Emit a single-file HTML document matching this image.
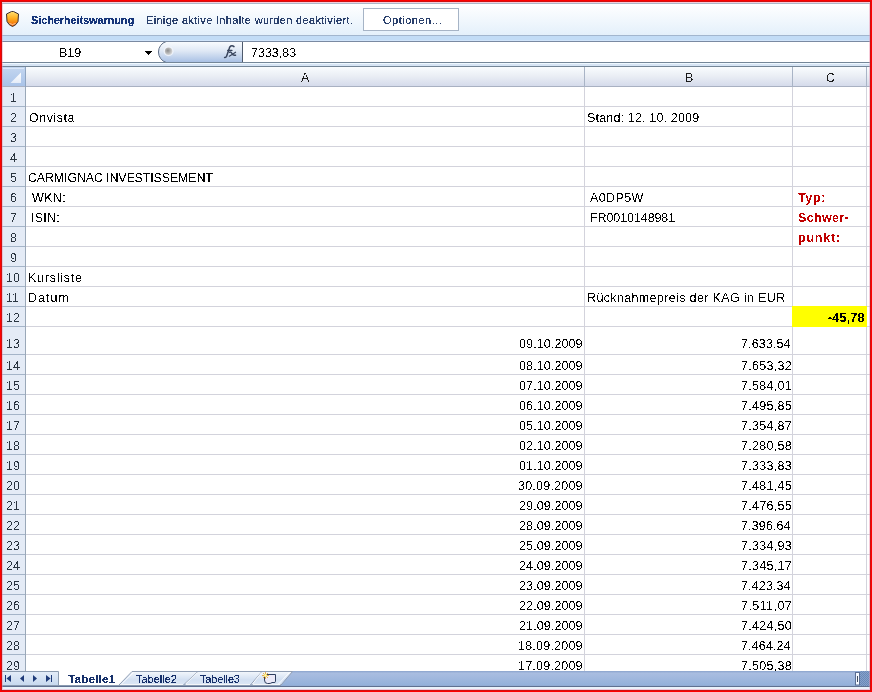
<!DOCTYPE html><html><head><meta charset="utf-8"><style>
*{margin:0;padding:0;box-sizing:border-box}
html,body{width:872px;height:692px;overflow:hidden;background:#fff;font-family:"Liberation Sans",sans-serif}
.a{position:absolute}
.t{position:absolute;white-space:pre;line-height:1;filter:url(#th)}
</style></head><body>
<svg width="1" height="1" style="position:absolute;left:0;top:0"><defs><filter id="th" filterUnits="userSpaceOnUse" x="-20" y="-20" width="600" height="60"><feComponentTransfer><feFuncA type="discrete" tableValues="0 1"/></feComponentTransfer></filter><filter id="th4" filterUnits="userSpaceOnUse" x="-20" y="-20" width="600" height="60"><feComponentTransfer><feFuncA type="discrete" tableValues="0 0 1 1 1"/></feComponentTransfer></filter></defs></svg>
<svg class="a" style="left:0;top:0" width="872" height="87" viewBox="0 0 872 87" shape-rendering="crispEdges">
<defs>
<linearGradient id="mg" x1="0" y1="0" x2="0" y2="1"><stop offset="0" stop-color="#ffffff"/><stop offset="1" stop-color="#e4f0fb"/></linearGradient>
<linearGradient id="hg" x1="0" y1="0" x2="0" y2="1"><stop offset="0" stop-color="#f9fcfe"/><stop offset="0.5" stop-color="#e9edf4"/><stop offset="1" stop-color="#d5dbeb"/></linearGradient>
<linearGradient id="cg" x1="0" y1="0" x2="0" y2="1"><stop offset="0" stop-color="#c3d6f0"/><stop offset="1" stop-color="#a9c3e8"/></linearGradient>
</defs>
<rect x="2" y="3" width="868" height="1" fill="#aab9ca"/>
<rect x="2" y="4" width="868" height="31" fill="url(#mg)"/>
<rect x="2" y="35" width="868" height="1" fill="#a2b6ce"/>
<rect x="2" y="36" width="868" height="4" fill="#c2dcf6"/>
<rect x="2" y="40" width="868" height="1" fill="#d0e4fa"/>
<rect x="2" y="41" width="868" height="1" fill="#7a8aa2"/>
<rect x="2" y="42" width="868" height="20" fill="#ffffff"/>
<rect x="2" y="62" width="868" height="1" fill="#748698"/>
<rect x="2" y="63" width="868" height="1" fill="#eef8ff"/>
<rect x="2" y="64" width="868" height="2" fill="#d6e4f4"/>
<rect x="2" y="66" width="868" height="1" fill="#748698"/>
<rect x="2" y="67" width="868" height="19" fill="url(#hg)"/>
<rect x="2" y="86" width="868" height="1" fill="#a9b1c2"/>
<rect x="2" y="67" width="23" height="19" fill="url(#cg)"/>
<rect x="3" y="68" width="21" height="1" fill="#dae7f8"/>
<rect x="25" y="67" width="1" height="20" fill="#8ea4c0"/>
<rect x="584" y="67" width="1" height="20" fill="#a9b4c6"/>
<rect x="792" y="67" width="1" height="20" fill="#a9b4c6"/>
<rect x="866" y="67" width="1" height="20" fill="#a9b4c6"/>
<rect x="363" y="8" width="95" height="22" fill="#ffffff" stroke="#a6b4c6" stroke-width="1" transform="translate(0.5 0.5)"/>
</svg>
<svg class="a" style="left:0;top:0" width="260" height="87" viewBox="0 0 260 87">
<defs>
<linearGradient id="sg" x1="0" y1="0" x2="0" y2="1"><stop offset="0" stop-color="#ffe070"/><stop offset="0.45" stop-color="#ffb020"/><stop offset="1" stop-color="#f06000"/></linearGradient>
<linearGradient id="pg" x1="0" y1="0" x2="0" y2="1"><stop offset="0" stop-color="#fafcfe"/><stop offset="0.45" stop-color="#dfe8f5"/><stop offset="1" stop-color="#a7bfe4"/></linearGradient>
<radialGradient id="dg" cx="0.4" cy="0.4" r="0.6"><stop offset="0" stop-color="#8c8c8c"/><stop offset="1" stop-color="#d4d4d4"/></radialGradient>
<linearGradient id="tri" x1="0" y1="0" x2="0" y2="1"><stop offset="0" stop-color="#ffffff"/><stop offset="1" stop-color="#e4ecf8"/></linearGradient>
</defs>
<path d="M11.5 11.5 H13.5 L18.5 14 L18 21.5 Q16.5 25 12.5 26.5 Q8.5 25 7 21.5 L6.5 14 Z" fill="url(#sg)" stroke="#3c3030" stroke-width="1"/>
<path d="M9.5 23.5 Q12.5 25.5 15.5 23.5" fill="none" stroke="#ffd8c0" stroke-width="1" opacity="0.8"/>
<g fill="#000" shape-rendering="crispEdges"><rect x="145" y="51" width="7" height="1"/><rect x="146" y="52" width="5" height="1"/><rect x="147" y="53" width="3" height="1"/><rect x="148" y="54" width="1" height="1"/></g>
<path d="M243 41.5 H166.2 A11 11 0 0 0 166.2 62.5 H243 Z" fill="url(#pg)"/>
<path d="M166.2 41.5 A11 11 0 0 0 166.2 62.5" fill="none" stroke="#5c6c84" stroke-width="1"/>
<rect x="160" y="41" width="83" height="1" fill="#7a8aa2"/><rect x="160" y="62" width="83" height="1" fill="#748698"/>
<rect x="242" y="42" width="1" height="20" fill="#4e5a6c"/>
<circle cx="168.6" cy="51.3" r="5" fill="#f4f7fc" opacity="0.75"/>
<circle cx="168.6" cy="51.3" r="3.7" fill="url(#dg)"/>
<path d="M10.5 83 L21 72.5 V83 Z" fill="url(#tri)"/>
</svg>
<svg class="a" style="left:220px;top:42px" width="20" height="18" viewBox="220 42 20 18"><g fill="none" stroke="#38445c" stroke-linecap="round"><path d="M234 46.6 Q232.5 45.3 230.8 46 Q229.6 46.6 229.2 48.5 L226.6 56.2 Q226 57.6 224.6 57.4" stroke-width="1.5"/><path d="M227.6 50.4 H232" stroke-width="1.1"/><path d="M229.3 52.3 Q231 51.5 232 53.5 Q233 55.8 235.6 55.2" stroke-width="1.4"/><path d="M235.6 52.2 L229.3 56.2" stroke-width="1.1"/></g></svg>
<div class="a" style="left:2px;top:87px;width:23px;height:584px;background:#e4ebf6"></div>
<div class="a" style="left:25px;top:87px;width:1px;height:584px;background:#9aa8b8"></div>
<div class="a" style="left:2px;top:106px;width:23px;height:1px;background:#a4b4c8"></div>
<div class="a" style="left:26px;top:106px;width:844px;height:1px;background:#d3d3dc"></div>
<div class="a" style="left:2px;top:126px;width:23px;height:1px;background:#a4b4c8"></div>
<div class="a" style="left:26px;top:126px;width:844px;height:1px;background:#d3d3dc"></div>
<div class="a" style="left:2px;top:146px;width:23px;height:1px;background:#a4b4c8"></div>
<div class="a" style="left:26px;top:146px;width:844px;height:1px;background:#d3d3dc"></div>
<div class="a" style="left:2px;top:166px;width:23px;height:1px;background:#a4b4c8"></div>
<div class="a" style="left:26px;top:166px;width:844px;height:1px;background:#d3d3dc"></div>
<div class="a" style="left:2px;top:186px;width:23px;height:1px;background:#a4b4c8"></div>
<div class="a" style="left:26px;top:186px;width:844px;height:1px;background:#d3d3dc"></div>
<div class="a" style="left:2px;top:206px;width:23px;height:1px;background:#a4b4c8"></div>
<div class="a" style="left:26px;top:206px;width:844px;height:1px;background:#d3d3dc"></div>
<div class="a" style="left:2px;top:226px;width:23px;height:1px;background:#a4b4c8"></div>
<div class="a" style="left:26px;top:226px;width:844px;height:1px;background:#d3d3dc"></div>
<div class="a" style="left:2px;top:246px;width:23px;height:1px;background:#a4b4c8"></div>
<div class="a" style="left:26px;top:246px;width:844px;height:1px;background:#d3d3dc"></div>
<div class="a" style="left:2px;top:266px;width:23px;height:1px;background:#a4b4c8"></div>
<div class="a" style="left:26px;top:266px;width:844px;height:1px;background:#d3d3dc"></div>
<div class="a" style="left:2px;top:286px;width:23px;height:1px;background:#a4b4c8"></div>
<div class="a" style="left:26px;top:286px;width:844px;height:1px;background:#d3d3dc"></div>
<div class="a" style="left:2px;top:306px;width:23px;height:1px;background:#a4b4c8"></div>
<div class="a" style="left:26px;top:306px;width:844px;height:1px;background:#d3d3dc"></div>
<div class="a" style="left:2px;top:326px;width:23px;height:1px;background:#a4b4c8"></div>
<div class="a" style="left:26px;top:326px;width:844px;height:1px;background:#d3d3dc"></div>
<div class="a" style="left:2px;top:354px;width:23px;height:1px;background:#a4b4c8"></div>
<div class="a" style="left:26px;top:354px;width:844px;height:1px;background:#d3d3dc"></div>
<div class="a" style="left:2px;top:374px;width:23px;height:1px;background:#a4b4c8"></div>
<div class="a" style="left:26px;top:374px;width:844px;height:1px;background:#d3d3dc"></div>
<div class="a" style="left:2px;top:394px;width:23px;height:1px;background:#a4b4c8"></div>
<div class="a" style="left:26px;top:394px;width:844px;height:1px;background:#d3d3dc"></div>
<div class="a" style="left:2px;top:414px;width:23px;height:1px;background:#a4b4c8"></div>
<div class="a" style="left:26px;top:414px;width:844px;height:1px;background:#d3d3dc"></div>
<div class="a" style="left:2px;top:434px;width:23px;height:1px;background:#a4b4c8"></div>
<div class="a" style="left:26px;top:434px;width:844px;height:1px;background:#d3d3dc"></div>
<div class="a" style="left:2px;top:454px;width:23px;height:1px;background:#a4b4c8"></div>
<div class="a" style="left:26px;top:454px;width:844px;height:1px;background:#d3d3dc"></div>
<div class="a" style="left:2px;top:474px;width:23px;height:1px;background:#a4b4c8"></div>
<div class="a" style="left:26px;top:474px;width:844px;height:1px;background:#d3d3dc"></div>
<div class="a" style="left:2px;top:494px;width:23px;height:1px;background:#a4b4c8"></div>
<div class="a" style="left:26px;top:494px;width:844px;height:1px;background:#d3d3dc"></div>
<div class="a" style="left:2px;top:514px;width:23px;height:1px;background:#a4b4c8"></div>
<div class="a" style="left:26px;top:514px;width:844px;height:1px;background:#d3d3dc"></div>
<div class="a" style="left:2px;top:534px;width:23px;height:1px;background:#a4b4c8"></div>
<div class="a" style="left:26px;top:534px;width:844px;height:1px;background:#d3d3dc"></div>
<div class="a" style="left:2px;top:554px;width:23px;height:1px;background:#a4b4c8"></div>
<div class="a" style="left:26px;top:554px;width:844px;height:1px;background:#d3d3dc"></div>
<div class="a" style="left:2px;top:574px;width:23px;height:1px;background:#a4b4c8"></div>
<div class="a" style="left:26px;top:574px;width:844px;height:1px;background:#d3d3dc"></div>
<div class="a" style="left:2px;top:594px;width:23px;height:1px;background:#a4b4c8"></div>
<div class="a" style="left:26px;top:594px;width:844px;height:1px;background:#d3d3dc"></div>
<div class="a" style="left:2px;top:614px;width:23px;height:1px;background:#a4b4c8"></div>
<div class="a" style="left:26px;top:614px;width:844px;height:1px;background:#d3d3dc"></div>
<div class="a" style="left:2px;top:634px;width:23px;height:1px;background:#a4b4c8"></div>
<div class="a" style="left:26px;top:634px;width:844px;height:1px;background:#d3d3dc"></div>
<div class="a" style="left:2px;top:654px;width:23px;height:1px;background:#a4b4c8"></div>
<div class="a" style="left:26px;top:654px;width:844px;height:1px;background:#d3d3dc"></div>
<div class="a" style="left:584px;top:87px;width:1px;height:584px;background:#d3d3dc"></div>
<div class="a" style="left:792px;top:87px;width:1px;height:584px;background:#d3d3dc"></div>
<div class="a" style="left:866px;top:87px;width:1px;height:584px;background:#d3d3dc"></div>
<div class="a" style="left:792px;top:306px;width:75px;height:21px;background:#ffff00"></div>
<div class="t" style="left:10px;top:92px;font-size:12.5px;color:#2b3440">1</div>
<div class="t" style="left:10px;top:112px;font-size:12.5px;color:#2b3440">2</div>
<div class="t" style="left:10px;top:132px;font-size:12.5px;color:#2b3440">3</div>
<div class="t" style="left:10px;top:152px;font-size:12.5px;color:#2b3440">4</div>
<div class="t" style="left:10px;top:172px;font-size:12.5px;color:#2b3440">5</div>
<div class="t" style="left:10px;top:192px;font-size:12.5px;color:#2b3440">6</div>
<div class="t" style="left:10px;top:212px;font-size:12.5px;color:#2b3440">7</div>
<div class="t" style="left:10px;top:232px;font-size:12.5px;color:#2b3440">8</div>
<div class="t" style="left:10px;top:252px;font-size:12.5px;color:#2b3440">9</div>
<div class="t" style="left:6px;top:272px;font-size:12.5px;color:#2b3440">10</div>
<div class="t" style="left:6px;top:292px;font-size:12.5px;color:#2b3440">11</div>
<div class="t" style="left:6px;top:312px;font-size:12.5px;color:#2b3440">12</div>
<div class="t" style="left:6px;top:338px;font-size:12.5px;color:#2b3440">13</div>
<div class="t" style="left:6px;top:360px;font-size:12.5px;color:#2b3440">14</div>
<div class="t" style="left:6px;top:380px;font-size:12.5px;color:#2b3440">15</div>
<div class="t" style="left:6px;top:400px;font-size:12.5px;color:#2b3440">16</div>
<div class="t" style="left:6px;top:420px;font-size:12.5px;color:#2b3440">17</div>
<div class="t" style="left:6px;top:440px;font-size:12.5px;color:#2b3440">18</div>
<div class="t" style="left:6px;top:460px;font-size:12.5px;color:#2b3440">19</div>
<div class="t" style="left:6px;top:480px;font-size:12.5px;color:#2b3440">20</div>
<div class="t" style="left:6px;top:500px;font-size:12.5px;color:#2b3440">21</div>
<div class="t" style="left:6px;top:520px;font-size:12.5px;color:#2b3440">22</div>
<div class="t" style="left:6px;top:540px;font-size:12.5px;color:#2b3440">23</div>
<div class="t" style="left:6px;top:560px;font-size:12.5px;color:#2b3440">24</div>
<div class="t" style="left:6px;top:580px;font-size:12.5px;color:#2b3440">25</div>
<div class="t" style="left:6px;top:600px;font-size:12.5px;color:#2b3440">26</div>
<div class="t" style="left:6px;top:620px;font-size:12.5px;color:#2b3440">27</div>
<div class="t" style="left:6px;top:640px;font-size:12.5px;color:#2b3440">28</div>
<div class="t" style="left:6px;top:660px;font-size:12.5px;color:#2b3440">29</div>
<svg class="a" style="left:0;top:660px" width="872" height="32" viewBox="0 660 872 32">
<defs>
<linearGradient id="tg" x1="0" y1="0" x2="0" y2="1"><stop offset="0" stop-color="#f3f7fc"/><stop offset="0.6" stop-color="#d3e0f2"/><stop offset="1" stop-color="#dce7f5"/></linearGradient>
<linearGradient id="ng" x1="0" y1="0" x2="0" y2="1"><stop offset="0" stop-color="#e3ecf8"/><stop offset="1" stop-color="#c7d9ef"/></linearGradient>
<linearGradient id="bg2" x1="0" y1="0" x2="0" y2="1"><stop offset="0" stop-color="#8aa3cc"/><stop offset="0.15" stop-color="#a9bde0"/><stop offset="1" stop-color="#93b0da"/></linearGradient>
</defs>
<rect x="2" y="671" width="868" height="15" fill="#fff"/>
<path d="M280 685.5 L292 671 H870 V685.5 Z" fill="url(#bg2)"/>
<path d="M2 671.5 H58.5 V685" fill="url(#ng)" stroke="#8c9cb0" stroke-width="1"/>
<rect x="2" y="672" width="56" height="13" fill="url(#ng)"/>
<path d="M250 685 L260.5 671.5 H292.5 L281 685 Z" fill="url(#tg)" stroke="#8f9db3" stroke-width="1"/>
<path d="M183 685 L196 671.5 H262 L250.5 685 Z" fill="url(#tg)" stroke="#8f9db3" stroke-width="1"/>
<path d="M119 685 L132 671.5 H198 L183.5 685 Z" fill="url(#tg)" stroke="#8f9db3" stroke-width="1"/>
<rect x="2" y="685" width="868" height="1" fill="#8a9ab0"/><rect x="281" y="685" width="589" height="1" fill="#93acd4"/><rect x="2" y="686" width="868" height="1" fill="#5f7090"/>
<rect x="2" y="687" width="868" height="3" fill="#eaf2fb"/>
<g fill="#1e3a78">
<rect x="5" y="675" width="1" height="7"/><path d="M11 675 V682 L6.5 678.5 Z"/>
<path d="M24 675 V682 L20 678.5 Z"/>
<path d="M33 675 V682 L37 678.5 Z"/>
<path d="M46 675 V682 L50.5 678.5 Z"/><rect x="51" y="675" width="1" height="7"/>
</g>
<path d="M266 674.5 H275.5 V681.5 Q275.5 682.5 274 682.5 H272 Q271 683.5 269 683.5 H267.5 Q264.5 683.5 264.5 680 V677" fill="#eceaf8" stroke="#2e3e5e" stroke-width="1"/>
<g stroke="#e8a020" stroke-width="0.9" opacity="0.9"><path d="M263 673 L268 678 M268 673 L263 678 M265.5 672 V679 M262 675.5 H269"/></g>
<circle cx="265.5" cy="675.5" r="1.4" fill="#fff890"/>
<g stroke="#ffffff" stroke-width="1" opacity="0.85" fill="none">
<path d="M121.5 684 L133.5 672.5"/><path d="M185.5 684 L197.5 672.5"/><path d="M252.5 684 L261.5 672.5"/><path d="M278.5 684 L289.5 672.5"/>
<path d="M120 684.5 H183"/><path d="M186 684.5 H250"/><path d="M253 684.5 H280"/>
</g>
<defs><pattern id="hatch" width="2" height="2" patternUnits="userSpaceOnUse"><rect width="2" height="2" fill="#86a2cc"/><rect width="1" height="1" fill="#6a88b6"/><rect x="1" y="1" width="1" height="1" fill="#6a88b6"/></pattern></defs>
<rect x="860" y="671" width="10" height="15" fill="url(#hatch)"/>
<rect x="855.5" y="672.5" width="4" height="12.5" fill="#f4f8ff" stroke="#5a6e94" stroke-width="1"/>
<rect x="857" y="676" width="1" height="6" fill="#404c60"/>
</svg>
<div class="t" style="left:31px;top:15px;font-size:11px;font-weight:bold;color:#16367a;letter-spacing:-0.118px;filter:url(#th4)">Sicherheitswarnung</div>
<div class="t" style="left:146px;top:15px;font-size:11px;font-weight:normal;color:#2c416c;letter-spacing:0.325px;filter:url(#th4)">Einige aktive Inhalte wurden deaktiviert.</div>
<div class="t" style="left:383px;top:15px;font-size:11px;font-weight:normal;color:#2c416c;letter-spacing:0.5px;filter:url(#th4)">Optionen...</div>
<div class="t" style="left:59px;top:47px;font-size:12.5px;font-weight:normal;color:#000;letter-spacing:0.0px">B19</div>
<div class="t" style="left:251px;top:47px;font-size:12.5px;font-weight:normal;color:#000;letter-spacing:0.0px">7333,83</div>
<div class="t" style="left:301px;top:72px;font-size:12.5px;font-weight:normal;color:#1a1a1a;letter-spacing:0px">A</div>
<div class="t" style="left:685px;top:72px;font-size:12.5px;font-weight:normal;color:#1a1a1a;letter-spacing:0px">B</div>
<div class="t" style="left:826px;top:72px;font-size:12.5px;font-weight:normal;color:#1a1a1a;letter-spacing:0px">C</div>
<div class="t" style="left:29px;top:112px;font-size:12.5px;font-weight:normal;color:#000;letter-spacing:0.5px">Onvista</div>
<div class="t" style="left:587px;top:112px;font-size:12.5px;font-weight:normal;color:#000;letter-spacing:0.167px">Stand: 12. 10. 2009</div>
<div class="t" style="left:28px;top:172px;font-size:12.5px;font-weight:normal;color:#000;letter-spacing:-0.174px">CARMIGNAC INVESTISSEMENT</div>
<div class="t" style="left:32px;top:192px;font-size:12.5px;font-weight:normal;color:#000;letter-spacing:0.333px">WKN:</div>
<div class="t" style="left:590px;top:192px;font-size:12.5px;font-weight:normal;color:#000;letter-spacing:0.4px">A0DP5W</div>
<div class="t" style="left:798px;top:192px;font-size:12.5px;font-weight:bold;color:#c00000;letter-spacing:0.667px">Typ:</div>
<div class="t" style="left:31px;top:212px;font-size:12.5px;font-weight:normal;color:#000;letter-spacing:0.25px">ISIN:</div>
<div class="t" style="left:590px;top:212px;font-size:12.5px;font-weight:normal;color:#000;letter-spacing:-0.091px">FR0010148981</div>
<div class="t" style="left:798px;top:212px;font-size:12.5px;font-weight:bold;color:#c00000;letter-spacing:0.333px">Schwer-</div>
<div class="t" style="left:798px;top:232px;font-size:12.5px;font-weight:bold;color:#c00000;letter-spacing:0.8px">punkt:</div>
<div class="t" style="left:28px;top:272px;font-size:12.5px;font-weight:normal;color:#000;letter-spacing:0.75px">Kursliste</div>
<div class="t" style="left:28px;top:292px;font-size:12.5px;font-weight:normal;color:#000;letter-spacing:1.0px">Datum</div>
<div class="t" style="left:587px;top:292px;font-size:12.5px;font-weight:normal;color:#000;letter-spacing:0.357px">Rücknahmepreis der KAG in EUR</div>
<div class="t" style="left:828px;top:312px;font-size:12.5px;font-weight:bold;color:#000;letter-spacing:0.2px">-45,78</div>
<div class="t" style="left:519px;top:338px;font-size:12.5px;font-weight:normal;color:#000;letter-spacing:0.111px">09.10.2009</div>
<div class="t" style="left:741px;top:338px;font-size:12.5px;font-weight:normal;color:#000;letter-spacing:0.143px">7.633,54</div>
<div class="t" style="left:519px;top:360px;font-size:12.5px;font-weight:normal;color:#000;letter-spacing:0.111px">08.10.2009</div>
<div class="t" style="left:741px;top:360px;font-size:12.5px;font-weight:normal;color:#000;letter-spacing:0.286px">7.653,32</div>
<div class="t" style="left:519px;top:380px;font-size:12.5px;font-weight:normal;color:#000;letter-spacing:0.111px">07.10.2009</div>
<div class="t" style="left:741px;top:380px;font-size:12.5px;font-weight:normal;color:#000;letter-spacing:0.286px">7.584,01</div>
<div class="t" style="left:519px;top:400px;font-size:12.5px;font-weight:normal;color:#000;letter-spacing:0.111px">06.10.2009</div>
<div class="t" style="left:741px;top:400px;font-size:12.5px;font-weight:normal;color:#000;letter-spacing:0.286px">7.495,85</div>
<div class="t" style="left:519px;top:420px;font-size:12.5px;font-weight:normal;color:#000;letter-spacing:0.111px">05.10.2009</div>
<div class="t" style="left:741px;top:420px;font-size:12.5px;font-weight:normal;color:#000;letter-spacing:0.286px">7.354,87</div>
<div class="t" style="left:519px;top:440px;font-size:12.5px;font-weight:normal;color:#000;letter-spacing:0.111px">02.10.2009</div>
<div class="t" style="left:741px;top:440px;font-size:12.5px;font-weight:normal;color:#000;letter-spacing:0.286px">7.280,58</div>
<div class="t" style="left:519px;top:460px;font-size:12.5px;font-weight:normal;color:#000;letter-spacing:0.111px">01.10.2009</div>
<div class="t" style="left:741px;top:460px;font-size:12.5px;font-weight:normal;color:#000;letter-spacing:0.286px">7.333,83</div>
<div class="t" style="left:518px;top:480px;font-size:12.5px;font-weight:normal;color:#000;letter-spacing:0.222px">30.09.2009</div>
<div class="t" style="left:741px;top:480px;font-size:12.5px;font-weight:normal;color:#000;letter-spacing:0.286px">7.481,45</div>
<div class="t" style="left:519px;top:500px;font-size:12.5px;font-weight:normal;color:#000;letter-spacing:0.111px">29.09.2009</div>
<div class="t" style="left:741px;top:500px;font-size:12.5px;font-weight:normal;color:#000;letter-spacing:0.286px">7.476,55</div>
<div class="t" style="left:519px;top:520px;font-size:12.5px;font-weight:normal;color:#000;letter-spacing:0.111px">28.09.2009</div>
<div class="t" style="left:741px;top:520px;font-size:12.5px;font-weight:normal;color:#000;letter-spacing:0.143px">7.396,64</div>
<div class="t" style="left:519px;top:540px;font-size:12.5px;font-weight:normal;color:#000;letter-spacing:0.111px">25.09.2009</div>
<div class="t" style="left:741px;top:540px;font-size:12.5px;font-weight:normal;color:#000;letter-spacing:0.286px">7.334,93</div>
<div class="t" style="left:519px;top:560px;font-size:12.5px;font-weight:normal;color:#000;letter-spacing:0.111px">24.09.2009</div>
<div class="t" style="left:741px;top:560px;font-size:12.5px;font-weight:normal;color:#000;letter-spacing:0.286px">7.345,17</div>
<div class="t" style="left:519px;top:580px;font-size:12.5px;font-weight:normal;color:#000;letter-spacing:0.111px">23.09.2009</div>
<div class="t" style="left:741px;top:580px;font-size:12.5px;font-weight:normal;color:#000;letter-spacing:0.143px">7.423,34</div>
<div class="t" style="left:519px;top:600px;font-size:12.5px;font-weight:normal;color:#000;letter-spacing:0.111px">22.09.2009</div>
<div class="t" style="left:741px;top:600px;font-size:12.5px;font-weight:normal;color:#000;letter-spacing:0.429px">7.511,07</div>
<div class="t" style="left:519px;top:620px;font-size:12.5px;font-weight:normal;color:#000;letter-spacing:0.111px">21.09.2009</div>
<div class="t" style="left:741px;top:620px;font-size:12.5px;font-weight:normal;color:#000;letter-spacing:0.286px">7.424,50</div>
<div class="t" style="left:518px;top:640px;font-size:12.5px;font-weight:normal;color:#000;letter-spacing:0.222px">18.09.2009</div>
<div class="t" style="left:741px;top:640px;font-size:12.5px;font-weight:normal;color:#000;letter-spacing:0.143px">7.464,24</div>
<div class="t" style="left:518px;top:660px;font-size:12.5px;font-weight:normal;color:#000;letter-spacing:0.222px">17.09.2009</div>
<div class="t" style="left:741px;top:660px;font-size:12.5px;font-weight:normal;color:#000;letter-spacing:0.286px">7.505,38</div>
<div class="t" style="left:68px;top:674px;font-size:11.8px;font-weight:bold;color:#15306b;letter-spacing:0.143px;filter:url(#th4)">Tabelle1</div>
<div class="t" style="left:136px;top:674px;font-size:11px;font-weight:normal;color:#15306b;letter-spacing:0.0px;filter:url(#th4)">Tabelle2</div>
<div class="t" style="left:200px;top:674px;font-size:11px;font-weight:normal;color:#15306b;letter-spacing:-0.143px;filter:url(#th4)">Tabelle3</div>
<div class="a" style="left:2px;top:2px;width:868px;height:688px;border:1px solid rgba(240,140,170,0.45)"></div>
<div class="a" style="left:1px;top:1px;width:870px;height:690px;border:1px solid #cf1010"></div>
<div class="a" style="left:0;top:0;width:872px;height:692px;border:1px solid #ff0000"></div>
</body></html>
